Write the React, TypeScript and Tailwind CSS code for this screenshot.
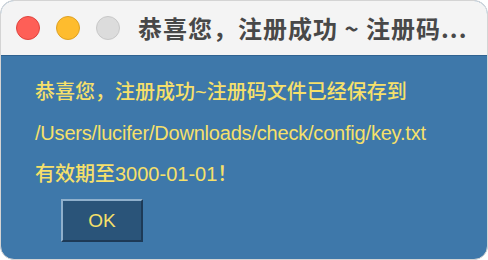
export default function App() {
  return (
    <div className="h-[260px] w-[488px] bg-white">
      <div className="flex h-full w-full flex-col overflow-hidden rounded-[14px] border border-[#d4d4d4] bg-[#3e78aa]">
        {/* title bar */}
        <div className="flex h-[55px] shrink-0 items-center border-b border-[#2f6290] bg-[#f4f4f4] pl-[15px] pr-[14px]">
          <div className="flex items-center gap-4">
            <span className="h-6 w-6 rounded-full border border-[#e0443e] bg-[#fe5f57]" />
            <span className="h-6 w-6 rounded-full border border-[#dea123] bg-[#febc2e]" />
            <span className="h-6 w-6 rounded-full border border-[#c8c8c8] bg-[#dcdcdc]" />
          </div>
          <div
            className="ml-[18px] whitespace-nowrap text-[24px] font-bold leading-none tracking-[1px] text-[#484848]"
            style={{ fontFamily: '"Noto Sans CJK SC", "Liberation Sans", sans-serif' }}
          >
            恭喜您，注册成功 ~ 注册码...
          </div>
        </div>

        {/* body */}
        <div
          className="flex flex-1 flex-col px-[34px] pt-[16px] text-[20px] font-medium leading-[41px] text-[#f6e06a]"
          style={{ fontFamily: '"Liberation Sans", "Noto Sans CJK SC", sans-serif' }}
        >
          <p>恭喜您，注册成功~注册码文件已经保存到</p>
          <p className="tracking-[-0.2px]">/Users/lucifer/Downloads/check/config/key.txt</p>
          <p>有效期至3000-01-01！</p>
          <button className="ml-[26px] mt-[4px] flex h-[43px] w-[82px] items-center justify-center border-2 border-t-[#8fb0cc] border-l-[#8fb0cc] border-b-[#1d3a57] border-r-[#1d3a57] bg-[#2a5479] text-[19px] leading-none text-[#f6e06a]">
            OK
          </button>
        </div>
      </div>
    </div>
  );
}
